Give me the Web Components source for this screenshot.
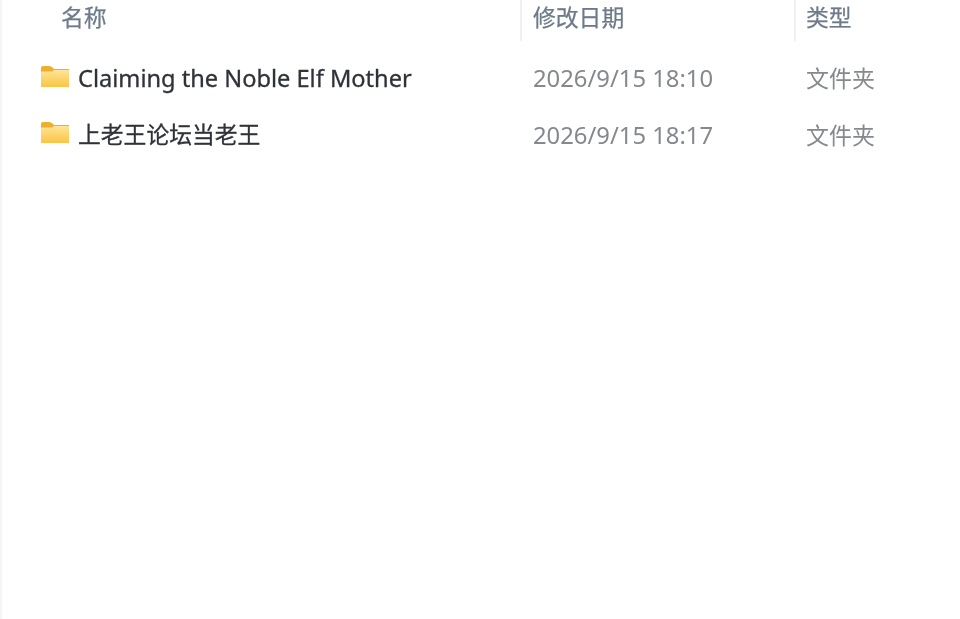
<!DOCTYPE html>
<html lang="zh">
<head>
<meta charset="utf-8">
<title>文件列表</title>
<style>
  html, body { margin: 0; height: 100%; background: #fff; overflow: hidden; }
  body { font-family: "Noto Sans", "Noto Sans CJK SC", sans-serif; }
</style>
</head>
<body>
<file-list>
  <file-header></file-header>
  <file-row name="Claiming the Noble Elf Mother" size="23.6" modified="2026/9/15 18:10" kind="文件夹"></file-row>
  <file-row name="上老王论坛当老王" size="22.8" modified="2026/9/15 18:17" kind="文件夹"></file-row>
</file-list>

<script>
(function() {
  const COLUMNS = 'grid-template-columns: 520px 274px 1fr;';
  const FONT = '"Noto Sans", "Noto Sans CJK SC", sans-serif';

  class FileList extends HTMLElement {
    constructor() {
      super();
      this.attachShadow({ mode: 'open' });
      this.shadowRoot.innerHTML = `
        <style>
          :host {
            display: flex;
            flex-direction: column;
            box-sizing: border-box;
            height: 619px;
            border-left: 2px solid #f5f5f6;
          }
          .rows { display: flex; flex-direction: column; filter: blur(0.5px); }
        </style>
        <div class="rows"><slot></slot></div>`;
    }
  }

  class FileHeader extends HTMLElement {
    constructor() {
      super();
      this.attachShadow({ mode: 'open' });
      this.shadowRoot.innerHTML = `
        <style>
          :host {
            display: grid;
            ${COLUMNS}
            height: 41px;
            margin-left: -2px;
            font: 22.8px/36px ${FONT};
            color: #6d7a8c;
            -webkit-text-stroke: 0.25px #6d7a8c;
          }
          div { height: 41px; box-sizing: border-box; }
          .name { padding-left: 61px; }
          .col { border-left: 2px solid #eef0f2; padding-left: 11px; }
          .col.kind { padding-left: 10px; }
        </style>
        <div class="name">名称</div>
        <div class="col">修改日期</div>
        <div class="col kind">类型</div>`;
    }
  }

  class FileRow extends HTMLElement {
    constructor() {
      super();
      this.attachShadow({ mode: 'open' });
      this.shadowRoot.innerHTML = `
        <style>
          :host {
            display: grid;
            ${COLUMNS}
            height: 56.5px;
            margin-left: -2px;
            align-items: center;
            font: 23.8px/30px ${FONT};
            position: relative;
            top: 9px;
          }
          .name {
            display: flex;
            align-items: center;
            gap: 9px;
            padding-left: 41px;
            color: #2f3338;
            -webkit-text-stroke: 0.3px #2f3338;
            white-space: nowrap;
          }
          svg { flex: none; display: block; margin-top: -4px; }
          .date { padding-left: 13px; color: #85898e; }
          .kind { padding-left: 12px; color: #85898e; font-size: 23px; }
        </style>
        <div class="name">
          <svg width="28" height="21" viewBox="0 0 28 21">
            <defs>
              <linearGradient id="g" x1="0" y1="0" x2="0" y2="1">
                <stop offset="0" stop-color="#fee596"/>
                <stop offset="1" stop-color="#fac445"/>
              </linearGradient>
            </defs>
            <path d="M0 2Q0 0 2 0H8Q10 0 11.5 1.5L13 3H28V6H0z" fill="#efae2c"/>
            <path d="M0 5.5H11L13 4H28V21H0z" fill="url(#g)"/>
          </svg>
          <span></span>
        </div>
        <div class="date"></div>
        <div class="kind"></div>`;
    }

    connectedCallback() {
      const name = this.shadowRoot.querySelector('span');
      name.textContent = this.getAttribute('name');
      name.style.fontSize = this.getAttribute('size') + 'px';
      this.shadowRoot.querySelector('.date').textContent = this.getAttribute('modified');
      this.shadowRoot.querySelector('.kind').textContent = this.getAttribute('kind');
    }
  }

  customElements.define('file-list', FileList);
  customElements.define('file-header', FileHeader);
  customElements.define('file-row', FileRow);
})();
</script>
</body>
</html>
